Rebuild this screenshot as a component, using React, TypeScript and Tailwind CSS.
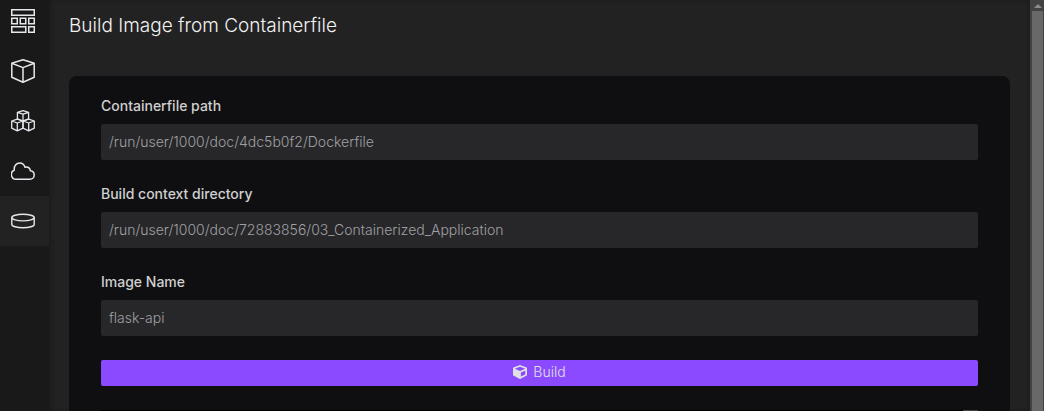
import type { ReactNode } from "react";
import { useState } from "react";

function DashboardIcon() {
  return (
    <svg viewBox="0 0 24 24" className="size-6" fill="none" stroke="currentColor" strokeWidth="1.5" aria-hidden="true">
      <rect x="0.75" y="0.75" width="22.5" height="5.5" />
      <rect x="0.75" y="9.25" width="5.5" height="5.5" />
      <rect x="9.25" y="9.25" width="5.5" height="5.5" />
      <rect x="17.75" y="9.25" width="5.5" height="5.5" />
      <rect x="0.75" y="17.75" width="14" height="5.5" />
      <rect x="17.75" y="17.75" width="5.5" height="5.5" />
    </svg>
  );
}

function CubeIcon() {
  return (
    <svg viewBox="0 0 24 24" className="size-6" fill="none" stroke="currentColor" strokeWidth="1.5" strokeLinejoin="round" aria-hidden="true">
      <path d="M12 0.8 L23.2 4.3 V18.2 L12 23.2 L0.8 18.2 V4.3 Z" />
      <path d="M0.8 4.3 L12 8.6 L23.2 4.3 M12 8.6 V23.2" />
    </svg>
  );
}

function PodsIcon() {
  return (
    <svg viewBox="0 0 24 24" className="size-6" fill="none" stroke="currentColor" strokeWidth="1.3" strokeLinejoin="round" aria-hidden="true">
      <path d="M12 1.6 L17.6 3.3 V9.8 L12 12.2 L6.4 9.8 V3.3 Z M6.4 3.3 L12 5.2 L17.6 3.3 M12 5.2 V12.2" />
      <path d="M6.3 10.2 L12 12 V19.2 L6.3 21.8 L0.7 19.2 V12 Z M0.7 12 L6.3 14 L12 12 M6.3 14 V21.8" />
      <path d="M17.7 10.2 L23.3 12 V19.2 L17.7 21.8 L12 19.2 V12 Z M12 12 L17.7 14 L23.3 12 M17.7 14 V21.8" />
    </svg>
  );
}

function CloudIcon() {
  return (
    <svg viewBox="0 0 24 24" className="size-6" fill="none" stroke="currentColor" strokeWidth="1.5" strokeLinejoin="round" strokeLinecap="round" aria-hidden="true">
      <path d="M5.6 20.3 A4.8 4.8 0 0 1 3.3 11.1 C2.8 7.1 5.3 4 8.7 4 C11.3 4 13.2 5.6 14 8.2 C16.4 7.3 19.1 8.7 19.3 11.8 C21.7 12 23.2 13.7 23.2 16 C23.2 18.4 21.4 20.3 19 20.3 Z" />
    </svg>
  );
}

function VolumeIcon() {
  return (
    <svg viewBox="0 0 24 24" className="size-6" fill="none" stroke="currentColor" strokeWidth="1.4" aria-hidden="true">
      <ellipse cx="12" cy="8.6" rx="11.2" ry="3.3" />
      <path d="M0.8 8.6 V15.4 C0.8 17.2 5.8 18.7 12 18.7 S23.2 17.2 23.2 15.4 V8.6" />
    </svg>
  );
}

function SolidCubeIcon() {
  return (
    <svg viewBox="0 0 512 512" className="size-[14px]" fill="currentColor" aria-hidden="true">
      <path d="M239.1 6.3l-208 78c-18.7 7-31.1 25-31.1 45v225.1c0 18.2 10.3 34.8 26.5 42.9l208 104c13.5 6.8 29.4 6.8 42.9 0l208-104c16.3-8.1 26.5-24.8 26.5-42.9V129.3c0-20-12.4-37.9-31.1-44.9l-208-78C262 2.2 250 2.2 239.1 6.3zM256 68.4l192 72v1.1l-192 78-192-78v-1.1l192-72zm32 356V275.5l160-65v133.9l-160 80z" />
    </svg>
  );
}

const navItems: { label: string; icon: ReactNode; active?: boolean }[] = [
  { label: "Dashboard", icon: <DashboardIcon /> },
  { label: "Containers", icon: <CubeIcon /> },
  { label: "Pods", icon: <PodsIcon /> },
  { label: "Images", icon: <CloudIcon /> },
  { label: "Volumes", icon: <VolumeIcon />, active: true },
];

function Sidebar() {
  return (
    <nav className="w-[49px] shrink-0 bg-[#19191a] text-gray-200 shadow-[0_0_4px_#19191a]">
      <div className="-mt-1 flex flex-col">
        {navItems.map((item) => (
          <a
            key={item.label}
            href="#"
            aria-label={item.label}
            aria-current={item.active ? "page" : undefined}
            className={
              item.active
                ? "flex h-[50px] items-center bg-[#222222] pl-[11px]"
                : "flex h-[50px] items-center pl-[11px]"
            }
          >
            {item.icon}
          </a>
        ))}
      </div>
    </nav>
  );
}

function Field({ id, label, initial }: { id: string; label: string; initial: string }) {
  const [value, setValue] = useState(initial);
  return (
    <div className="mb-6">
      <label htmlFor={id} className="mb-2 block text-[14px] leading-5 font-medium text-[#d0d0d0]">
        {label}
      </label>
      <input
        id={id}
        type="text"
        value={value}
        onChange={(event) => setValue(event.target.value)}
        className="block h-9 w-full rounded-xs bg-[#27272a] px-2 pb-0.5 text-[14px] leading-5 font-light text-[#a0a0a2] outline-none"
      />
    </div>
  );
}

function ScrollTrack() {
  return (
    <div className="flex w-[14px] shrink-0 flex-col bg-[#424242] pr-px pl-[2px]" aria-hidden="true">
      <div className="flex h-[11px] items-center justify-center">
        <svg viewBox="0 0 8 4" className="h-1 w-2" fill="#8c8c8c">
          <path d="M4 0 L8 4 H0 Z" />
        </svg>
      </div>
      <div className="flex-1 bg-[#686868]" />
    </div>
  );
}

export default function App() {
  return (
    <div className="flex h-screen overflow-hidden bg-[#222222] font-['Inter',sans-serif]">
      <Sidebar />
      <main className="min-w-0 flex-1 overflow-hidden px-5 shadow-[inset_0_0_4px_#19191a]">
        <h1 className="pt-3 pb-9 text-[19px] leading-7 font-light text-[#f2f2f2]">Build Image from Containerfile</h1>
        <form
          className="rounded-t-lg bg-[#0f0f11] px-8 pt-5"
          onSubmit={(event) => event.preventDefault()}
        >
          <Field id="containerfile" label="Containerfile path" initial="/run/user/1000/doc/4dc5b0f2/Dockerfile" />
          <Field
            id="context"
            label="Build context directory"
            initial="/run/user/1000/doc/72883856/03_Containerized_Application"
          />
          <Field id="image-name" label="Image Name" initial="flask-api" />
          <button
            type="submit"
            className="flex h-[26px] w-full items-center justify-center gap-[6px] rounded-xs bg-[#8b4aff] pb-0.5 text-[14px] leading-5 font-light text-[#e0e0e0]"
          >
            <SolidCubeIcon />
            Build
          </button>
          <div className="mt-6 flex h-32 justify-end bg-black">
            <div className="w-[15px] bg-[#424242]" />
          </div>
        </form>
      </main>
      <ScrollTrack />
    </div>
  );
}
